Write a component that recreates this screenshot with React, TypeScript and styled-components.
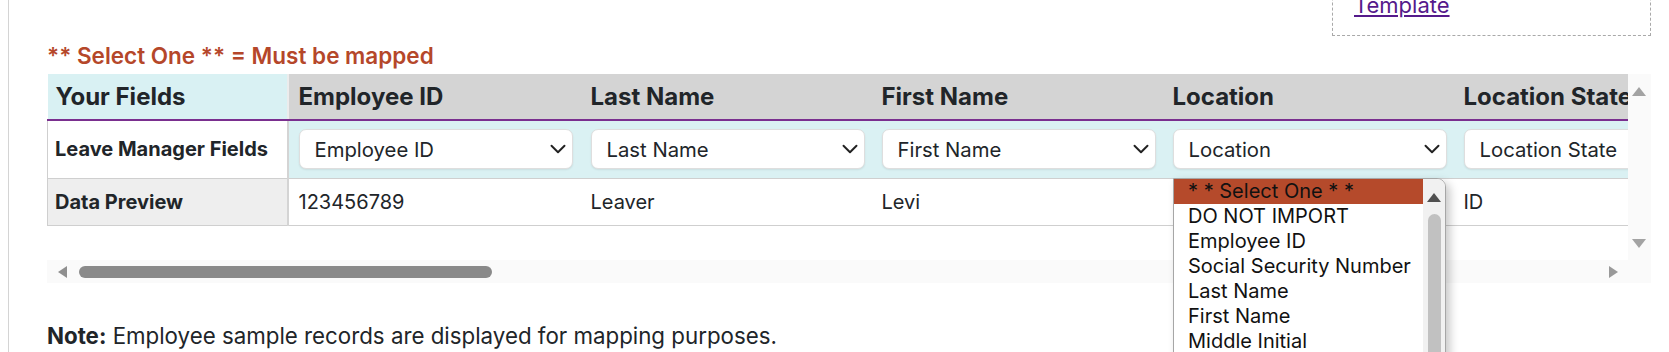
import React from 'react';
import styled, { createGlobalStyle } from 'styled-components';
import { ChevronDown } from 'lucide-react';

const GlobalStyle = createGlobalStyle`
  html, body { margin: 0; padding: 0; background: #ffffff; }
  body {
    font-family: Inter, "Noto Sans", sans-serif;
    color: #212529;
    overflow: hidden;
  }
  * { box-sizing: border-box; }
`;

const Page = styled.div`
  margin-left: 8px;
  width: 1661px;
  height: 352px;
  border-left: 1px solid #d4d4d4;
  padding: 0 18px 0 38px;
  overflow: hidden;
`;

const TopBar = styled.div`
  display: flex;
  justify-content: flex-end;
  height: 36px;
`;

const TemplateBox = styled.div`
  width: 319px;
  height: 64px;
  margin-top: -28px;
  border: 1px dashed #a9a9a9;
  border-top: none;
  display: flex;
  align-items: flex-end;
  padding: 0 0 18px 21px;
`;

const TemplateLink = styled.a`
  font-size: 22px;
  line-height: 24px;
  color: #551a8b;
  text-decoration: underline;
  text-underline-offset: 2px;
`;

const Legend = styled.div`
  margin: 8px 0 6px;
  font-size: 22.5px;
  line-height: 24px;
  font-weight: 600;
  color: #b5472a;
`;

const ScrollFrame = styled.div`
  position: relative;
  width: 1604px;
  display: grid;
  grid-template-columns: 1fr 23px;
  grid-template-rows: 186px 23px;
  background: #fafafa;
`;

const Viewport = styled.div`
  overflow: hidden;
  background: #ffffff;
`;

const Table = styled.table`
  border-collapse: collapse;
  table-layout: fixed;
`;

const Col = styled.col<{ $w: number }>`
  width: ${(p) => p.$w}px;
`;

const HeadCell = styled.th<{ $label?: boolean }>`
  height: 46px;
  padding: 0 ${(p) => (p.$label ? '8px' : '10px')};
  text-align: left;
  font-size: 24px;
  font-weight: 700;
  white-space: nowrap;
  overflow: hidden;
  background: ${(p) => (p.$label ? '#d9f1f3' : '#d4d4d4')};
  border-bottom: 2px solid #7a2f8f;
  border-right: ${(p) => (p.$label ? '2px solid #ececec' : 'none')};
`;

const MapCell = styled.td<{ $label?: boolean }>`
  height: 58px;
  padding: 0 8px 0 ${(p) => (p.$label ? '7px' : '10px')};
  font-size: 20px;
  font-weight: ${(p) => (p.$label ? 700 : 400)};
  white-space: nowrap;
  background: ${(p) => (p.$label ? '#ffffff' : '#daf1f3')};
  border-bottom: 1px solid #cfcfcf;
  border-left: ${(p) => (p.$label ? '1px solid #cfcfcf' : 'none')};
  border-right: ${(p) => (p.$label ? '2px solid #d4d4d4' : 'none')};
`;

const PreviewCell = styled.td<{ $label?: boolean }>`
  height: 47px;
  padding: 0 10px 0 ${(p) => (p.$label ? '7px' : '10px')};
  font-size: 20px;
  font-weight: ${(p) => (p.$label ? 700 : 400)};
  white-space: nowrap;
  background: ${(p) => (p.$label ? '#eeeeee' : '#ffffff')};
  border-bottom: 1px solid #cfcfcf;
  border-left: ${(p) => (p.$label ? '1px solid #cfcfcf' : 'none')};
  border-right: ${(p) => (p.$label ? '2px solid #d4d4d4' : 'none')};
`;

const SelectWrap = styled.div`
  position: relative;
  width: 274px;
  height: 40px;
`;

const FieldSelect = styled.select`
  appearance: none;
  width: 100%;
  height: 100%;
  padding: 0 36px 0 15px;
  font-family: Inter, "Noto Sans", sans-serif;
  font-size: 20.3px;
  color: #212529;
  background: #ffffff;
  border: 1px solid #dedede;
  border-radius: 7px;
  box-shadow: 0 1px 2px rgba(0, 0, 0, 0.08);
  outline: none;
`;

const Chevron = styled(ChevronDown)`
  position: absolute;
  right: 2px;
  top: 7px;
  color: #222222;
  pointer-events: none;
`;

const VTrack = styled.div`
  display: flex;
  flex-direction: column;
  justify-content: space-between;
  align-items: center;
  padding: 13px 2px 12px 0;
  background: #fafafa;
`;

const HTrack = styled.div`
  grid-column: 1 / 3;
  display: flex;
  align-items: center;
  padding: 0 33px 0 11px;
  background: #fafafa;
`;

const HThumb = styled.div`
  width: 413px;
  height: 12px;
  margin-left: 12px;
  border-radius: 6px;
  background: #8a8a8a;
`;

const Spacer = styled.div`
  flex: 1;
`;

const Arrow = styled.div<{ $dir: 'up' | 'down' | 'left' | 'right'; $color: string }>`
  width: 0;
  height: 0;
  border-style: solid;
  ${(p) =>
    p.$dir === 'up'
      ? `border-width: 0 7px 9px 7px; border-color: transparent transparent ${p.$color} transparent;`
      : p.$dir === 'down'
      ? `border-width: 9px 7px 0 7px; border-color: ${p.$color} transparent transparent transparent;`
      : p.$dir === 'left'
      ? `border-width: 6px 9px 6px 0; border-color: transparent ${p.$color} transparent transparent;`
      : `border-width: 6px 0 6px 9px; border-color: transparent transparent transparent ${p.$color};`}
`;

const Dropdown = styled.div`
  position: absolute;
  left: 1126px;
  top: 104px;
  width: 273px;
  height: 200px;
  display: flex;
  background: #ffffff;
  border: 1px solid #a6a6a6;
  border-radius: 0 9px 0 0;
  box-shadow: 4px 4px 10px rgba(0, 0, 0, 0.22);
  overflow: hidden;
`;

const OptionList = styled.ul`
  flex: 1;
  margin: 0;
  padding: 0;
  list-style: none;
`;

const OptionItem = styled.li<{ $active?: boolean }>`
  height: 25px;
  padding-left: 14px;
  font-size: 20px;
  line-height: 25px;
  white-space: nowrap;
  color: #111111;
  background: ${(p) => (p.$active ? '#b54a2b' : 'transparent')};
`;

const ListBar = styled.div`
  width: 22px;
  display: flex;
  flex-direction: column;
  align-items: center;
  padding-top: 14px;
  background: #f1f1f1;
`;

const ListThumb = styled.div`
  width: 13px;
  flex: 1;
  margin-top: 12px;
  border-radius: 7px 7px 0 0;
  background: #c1c1c1;
`;

const Note = styled.p`
  margin: 41px 0 0;
  font-size: 22.3px;
  line-height: 24px;
`;

const columns = [
  { head: 'Employee ID', value: 'Employee ID', preview: '123456789', width: 293 },
  { head: 'Last Name', value: 'Last Name', preview: 'Leaver', width: 291 },
  { head: 'First Name', value: 'First Name', preview: 'Levi', width: 291 },
  { head: 'Location', value: 'Location', preview: '', width: 291 },
  { head: 'Location State', value: 'Location State', preview: 'ID', width: 291 },
  { head: 'Hire Date', value: 'Hire Date', preview: '01/15/2020', width: 291 },
  { head: 'Job Title', value: 'Job Title', preview: 'Analyst', width: 291 },
];

const LABEL_WIDTH = 240;

const options = [
  '* * Select One * *',
  'DO NOT IMPORT',
  'Employee ID',
  'Social Security Number',
  'Last Name',
  'First Name',
  'Middle Initial',
  'Location',
  'Location State',
  'Hire Date',
  'Job Title',
];

export default function App() {
  const tableWidth = columns.reduce((sum, c) => sum + c.width, LABEL_WIDTH);
  return (
    <>
      <GlobalStyle />
      <Page>
        <TopBar>
          <TemplateBox>
            <TemplateLink href="#">Template</TemplateLink>
          </TemplateBox>
        </TopBar>
        <Legend>** Select One ** = Must be mapped</Legend>
        <ScrollFrame>
          <Viewport>
            <Table style={{ width: tableWidth }}>
              <colgroup>
                <Col $w={LABEL_WIDTH} />
                {columns.map((c) => (
                  <Col key={c.head} $w={c.width} />
                ))}
              </colgroup>
              <thead>
                <tr>
                  <HeadCell $label>Your Fields</HeadCell>
                  {columns.map((c) => (
                    <HeadCell key={c.head}>{c.head}</HeadCell>
                  ))}
                </tr>
              </thead>
              <tbody>
                <tr>
                  <MapCell $label>Leave Manager Fields</MapCell>
                  {columns.map((c) => (
                    <MapCell key={c.head}>
                      <SelectWrap>
                        <FieldSelect defaultValue={c.value}>
                          {options.map((o) => (
                            <option key={o}>{o}</option>
                          ))}
                        </FieldSelect>
                        <Chevron size={26} strokeWidth={1.8} />
                      </SelectWrap>
                    </MapCell>
                  ))}
                </tr>
                <tr>
                  <PreviewCell $label>Data Preview</PreviewCell>
                  {columns.map((c) => (
                    <PreviewCell key={c.head}>{c.preview}</PreviewCell>
                  ))}
                </tr>
              </tbody>
            </Table>
          </Viewport>
          <VTrack>
            <Arrow $dir="up" $color="#a3a3a3" />
            <Arrow $dir="down" $color="#a3a3a3" />
          </VTrack>
          <HTrack>
            <Arrow $dir="left" $color="#8f8f8f" />
            <HThumb />
            <Spacer />
            <Arrow $dir="right" $color="#999999" />
          </HTrack>
          <Dropdown>
            <OptionList>
              {options.slice(0, 8).map((o, i) => (
                <OptionItem key={o} $active={i === 0}>
                  {o}
                </OptionItem>
              ))}
            </OptionList>
            <ListBar>
              <Arrow $dir="up" $color="#505050" />
              <ListThumb />
            </ListBar>
          </Dropdown>
        </ScrollFrame>
        <Note>
          <strong>Note:</strong> Employee sample records are displayed for mapping purposes.
        </Note>
      </Page>
    </>
  );
}
